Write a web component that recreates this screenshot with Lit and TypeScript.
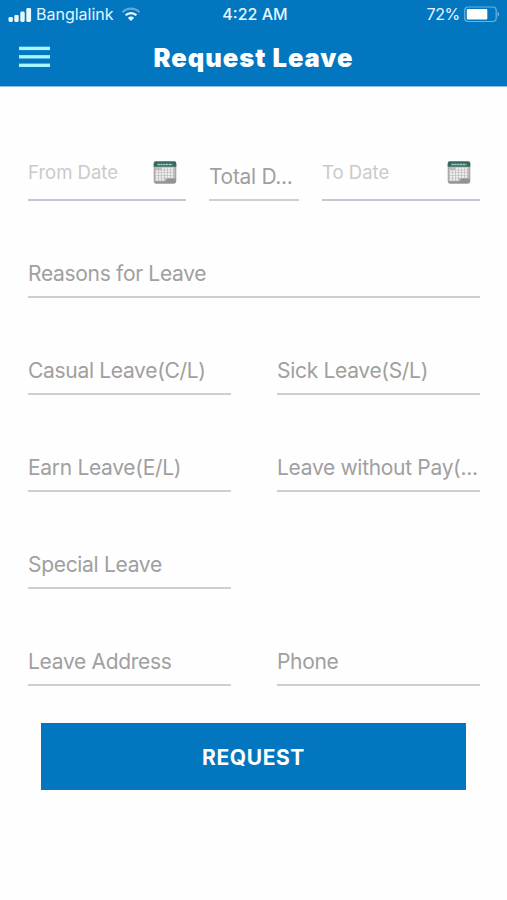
import { LitElement, html, css, svg } from "lit";
import { customElement, property } from "lit/decorators.js";

@customElement("calendar-icon")
export class CalendarIcon extends LitElement {
  static styles = css`
    :host { display: block; width: 24px; height: 24px; }
    svg { display: block; }
  `;
  render() {
    const cols = [1, 2, 3, 4, 5, 6];
    const rows = [0, 1, 2, 3, 4];
    return html`<svg width="24" height="24" viewBox="0 0 24 24">
      <rect x="0.7" y="2" width="22.6" height="21.5" rx="2.5" fill="#a4a4a4" />
      <rect x="1.8" y="6" width="20.4" height="15" fill="#bcbcbc" />
      ${rows.map((r) =>
        cols.map((c) =>
          (r === 0 && c < 3) || (r === 4 && c > 3)
            ? svg``
            : svg`<rect x=${c * 3 - 0.2} y=${7.6 + r * 2.7} width="2.3" height="2.1" fill="#eeeeee" />`
        )
      )}
      <path d="M13.5 19.6l1.5-1h7.8V21.5a2 2 0 0 1-2 2H3.5a2.4 2.4 0 0 1-2.4-1.6h11z" fill="#939393" />
      <path d="M.7 3.2a2 2 0 0 1 2-2h18.6a2 2 0 0 1 2 2v3.6H.7z" fill="#35695f" />
      <path d="M4.5 4.4h15" stroke="#a9cbc2" stroke-width="1.5" stroke-dasharray="2.4 .4" />
    </svg>`;
  }
}

@customElement("line-field")
export class LineField extends LitElement {
  @property() label = "";
  @property({ type: Boolean, reflect: true }) date = false;
  static styles = css`
    :host { display: block; box-sizing: border-box; height: 49px; border-bottom: 2px solid #cfcfcf; min-width: 0; }
    .row { display: flex; justify-content: space-between; height: 47px; padding-right: 9px; }
    .label { font-size: 21px; line-height: 49px; color: #a0a0a0; white-space: pre; letter-spacing: -0.31px; }
    :host([date]) { border-bottom-color: #c8c6d2; }
    :host([date]) .label { font-size: 18.5px; line-height: 41px; color: #cacaca; letter-spacing: 0; }
    calendar-icon { margin-top: 8px; }
  `;
  render() {
    return html`<div class="row">
      <span class="label">${this.label}</span>
      ${this.date ? html`<calendar-icon></calendar-icon>` : ""}
    </div>`;
  }
}

@customElement("app-root")
export class AppRoot extends LitElement {
  static styles = css`
    :host {
      display: block; height: 900px; background: #fefefe; overflow: hidden;
      font-family: Inter, "Liberation Sans", sans-serif;
    }
    header { background: #0277bf; height: 86px; border-bottom: 1px solid #8fbfe0; color: #e4f6ff; }
    .status { display: grid; grid-template-columns: 1fr auto 1fr; align-items: center; height: 29px; padding: 0 7px 0 8px; font-size: 16px; line-height: 29px; }
    .side { display: flex; align-items: center; }
    .right { justify-content: flex-end; gap: 4px; letter-spacing: -0.3px; }
    .carrier { margin: 0 7px 0 4px; }
    .time { font-weight: 500; padding-left: 2px; }
    .bar { display: grid; grid-template-columns: 60px 1fr 60px; align-items: center; height: 57px; }
    .bar svg { margin: -1px 0 0 19px; }
    svg { display: block; }
    h1 { margin: 0; font-size: 25.5px; line-height: 57px; font-weight: 900; letter-spacing: 1px; color: #fff; text-align: center; white-space: nowrap; }
    form { display: flex; flex-direction: column; gap: 48px; padding: 65px 27px 0 28px; }
    .dates { display: grid; grid-template-columns: 158px 90px 158px; justify-content: space-between; }
    .pair { display: grid; grid-template-columns: 203px 203px; justify-content: space-between; }
    button { display: block; width: 425px; height: 67px; margin: 37px 0 0 41px; border: 0; padding: 2px 0 0; background: #0277bf; color: #fff; font: 700 21px/65px Inter, sans-serif; letter-spacing: 0.6px; }
  `;
  render() {
    return html`
      <header>
        <div class="status">
          <div class="side">
            <svg width="24" height="16" viewBox="0 0 24 16" fill="#e9faff">
              <rect x="0.5" y="10" width="4.4" height="5" rx="1.4" />
              <rect x="6.3" y="8" width="4.4" height="7" rx="1.4" />
              <rect x="12.3" y="4.5" width="4.4" height="10.5" rx="1.4" />
              <rect x="18.3" y="1" width="4.8" height="14" rx="1.4" />
            </svg>
            <span class="carrier">Banglalink</span>
            <svg width="20" height="15" viewBox="0 0 20 15" fill="none">
              <path d="M1.5 5.2a12 12 0 0 1 17 0" stroke="#5fabd9" stroke-width="2.2" />
              <path d="M4.6 8.3a7.7 7.7 0 0 1 10.8 0" stroke="#e9faff" stroke-width="2.2" />
              <path d="M6.9 10.9a4.4 4.4 0 0 1 6.2 0L10 14z" fill="#e9faff" />
            </svg>
          </div>
          <span class="time">4:22 AM</span>
          <div class="side right">
            <span>72%</span>
            <svg width="36" height="17" viewBox="0 0 36 17">
              <rect x="0.7" y="1" width="31.5" height="14.5" rx="3.5" fill="none" stroke="#6bb2de" stroke-width="1.2" />
              <rect x="2.8" y="3" width="20.5" height="10.5" rx="1" fill="#fff" />
              <path d="M33.5 5.8c2.2.8 2.2 4.2 0 5z" fill="#6bb2de" />
            </svg>
          </div>
        </div>
        <div class="bar">
          <svg width="31" height="22" viewBox="0 0 31 22" fill="#a6f6ff">
            <rect y="0.7" width="31" height="3.4" /><rect y="9.1" width="31" height="3.4" /><rect y="17.6" width="31" height="3.4" />
          </svg>
          <h1>Request Leave</h1>
        </div>
      </header>
      <form>
        <div class="dates">
          <line-field date label="From Date"></line-field>
          <line-field label="Total D..."></line-field>
          <line-field date label="To Date"></line-field>
        </div>
        <line-field label="Reasons for Leave"></line-field>
        <div class="pair">
          <line-field label="Casual Leave(C/L)"></line-field>
          <line-field label="Sick Leave(S/L)"></line-field>
        </div>
        <div class="pair">
          <line-field label="Earn Leave(E/L)"></line-field>
          <line-field label="Leave without Pay(..."></line-field>
        </div>
        <div class="pair"><line-field label="Special Leave"></line-field></div>
        <div class="pair">
          <line-field label="Leave Address"></line-field>
          <line-field label="Phone"></line-field>
        </div>
      </form>
      <button>REQUEST</button>
    `;
  }
}
